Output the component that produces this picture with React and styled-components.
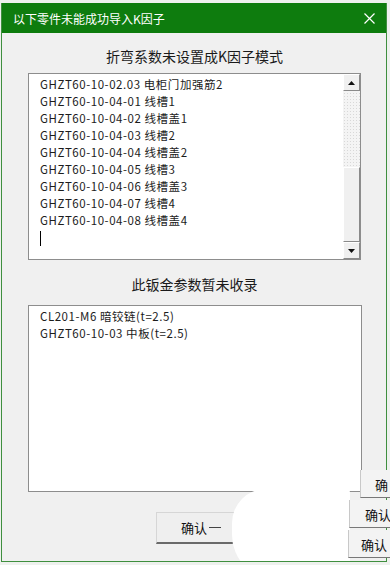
import React from "react";
import styled, { createGlobalStyle } from "styled-components";

const Global = createGlobalStyle`
  html, body {
    margin: 0;
    padding: 0;
    background: #eef1ee;
    font-family: "Noto Sans CJK SC", "Noto Sans", sans-serif;
  }
`;

const Window = styled.div`
  position: relative;
  width: 384px;
  height: 558px;
  margin: 3px 0 0 1px;
  border: 1px solid #3f8f3f;
  border-top: none;
  background: #f0f0f0;
  overflow: hidden;
`;

const TitleBar = styled.div`
  height: 30px;
  background: #0e7c0e;
  display: flex;
  align-items: center;
  justify-content: space-between;
  padding: 0 11px 0 11px;
  color: #fff;
  font-size: 12px;
`;

const Close = styled.svg`
  width: 11px;
  height: 11px;
`;

const Body = styled.div`
  display: flex;
  flex-direction: column;
  align-items: flex-start;
  padding: 13px 0 0 26px;
`;

const Label = styled.div`
  width: 333px;
  height: 20px;
  text-align: center;
  font-size: 14px;
  line-height: 20px;
  color: #1a1a1a;
  margin-bottom: ${(p) => p.gap}px;
`;

const ListBox = styled.div`
  box-sizing: border-box;
  width: ${(p) => p.w}px;
  height: 187px;
  flex: none;
  border: 1px solid #8d8d8d;
  background: #fff;
  display: flex;
  margin-bottom: ${(p) => p.gap}px;
`;

const Lines = styled.div`
  flex: 1;
  padding: 2px 0 0 11px;
  font-size: 11.5px;
  letter-spacing: 0.55px;
  line-height: 17px;
  color: #1c1c1c;
  white-space: nowrap;
`;

const Caret = styled.div`
  width: 1px;
  height: 15px;
  margin-top: 2px;
  background: #000;
`;

const Scrollbar = styled.div`
  width: 17px;
  display: flex;
  flex-direction: column;
  background-color: #f4f4f4;
  background-image: radial-gradient(#d8d8d8 0.6px, transparent 0.8px);
  background-size: 3px 3px;
`;

const Arrow = styled.div`
  box-sizing: border-box;
  height: 17px;
  background: #f0f0f0;
  border: 1px solid;
  border-color: #fff #8a8a8a #8a8a8a #fff;
  display: flex;
  align-items: center;
  justify-content: center;
`;

const Track = styled.div`
  flex: ${(p) => p.grow};
`;

const Thumb = styled.div`
  box-sizing: border-box;
  flex: ${(p) => p.grow};
  background: #f0f0f0;
  border: 1px solid;
  border-color: #fff #8a8a8a #8a8a8a #fff;
`;

const Footer = styled.div`
  width: 333px;
  display: flex;
  padding-left: 128px;
  box-sizing: border-box;
`;

const Button = styled.div`
  box-sizing: border-box;
  width: 80px;
  height: 32px;
  border: 1px solid #d6d6d6;
  border-bottom: 2px solid #6a6a6a;
  background: #efefef;
  display: flex;
  align-items: center;
  padding-left: 24px;
  gap: 2px;
  font-size: 13px;
  color: #111;
`;

const Dash = styled.span`
  width: 12px;
  height: 1px;
  background: #444;
`;

const Blob = styled.div`
  position: absolute;
  left: 230px;
  top: 486px;
  width: 118px;
  height: 90px;
  background: #fff;
  border-radius: 34px 4px 0 44px;
`;

const Ghosts = styled.div`
  position: absolute;
  left: 348px;
  top: 470px;
  width: 42px;
  overflow: hidden;
  display: flex;
  flex-direction: column;
  gap: 2px;
`;

const Ghost = styled.div`
  box-sizing: border-box;
  height: 28px;
  margin-left: ${(p) => p.shift}px;
  padding: 5px 0 0 ${(p) => p.pad}px;
  border-left: 1px solid #c8c8c8;
  border-bottom: 1px solid #777;
  background: #f3f3f3;
  font-size: 13px;
  color: #111;
  white-space: nowrap;
`;

const first = [
  "GHZT60-10-02.03 电柜门加强筋2",
  "GHZT60-10-04-01 线槽1",
  "GHZT60-10-04-02 线槽盖1",
  "GHZT60-10-04-03 线槽2",
  "GHZT60-10-04-04 线槽盖2",
  "GHZT60-10-04-05 线槽3",
  "GHZT60-10-04-06 线槽盖3",
  "GHZT60-10-04-07 线槽4",
  "GHZT60-10-04-08 线槽盖4",
];

const second = ["CL201-M6 暗铰链(t=2.5)", "GHZT60-10-03 中板(t=2.5)"];

const Tri = ({ up }) => (
  <svg width="7" height="4" viewBox="0 0 7 4">
    <polygon points={up ? "0,4 7,4 3.5,0" : "0,0 7,0 3.5,4"} fill="#111" />
  </svg>
);

export default function App() {
  return (
    <>
      <Global />
      <Window>
        <TitleBar>
          <span>以下零件未能成功导入K因子</span>
          <Close viewBox="0 0 11 11">
            <path d="M0.5 0.5 L10.5 10.5 M10.5 0.5 L0.5 10.5" stroke="#fff" strokeWidth="1.2" />
          </Close>
        </TitleBar>
        <Body>
          <Label gap={7}>折弯系数未设置成K因子模式</Label>
          <ListBox w={333} gap={14}>
            <Lines>
              {first.map((t) => (
                <div key={t}>{t}</div>
              ))}
              <Caret />
            </Lines>
            <Scrollbar>
              <Arrow>
                <Tri up />
              </Arrow>
              <Track grow={77} />
              <Thumb grow={73} />
              <Arrow>
                <Tri />
              </Arrow>
            </Scrollbar>
          </ListBox>
          <Label gap={11}>此钣金参数暂未收录</Label>
          <ListBox w={334} gap={20}>
            <Lines>
              {second.map((t) => (
                <div key={t}>{t}</div>
              ))}
            </Lines>
          </ListBox>
          <Footer>
            <Button>
              确认
              <Dash />
            </Button>
          </Footer>
        </Body>
        <Blob />
      </Window>
      <Ghosts>
        <Ghost shift={12} pad={14}>确</Ghost>
        <Ghost shift={1} pad={15}>确认</Ghost>
        <Ghost shift={0} pad={12}>确认</Ghost>
      </Ghosts>
    </>
  );
}
